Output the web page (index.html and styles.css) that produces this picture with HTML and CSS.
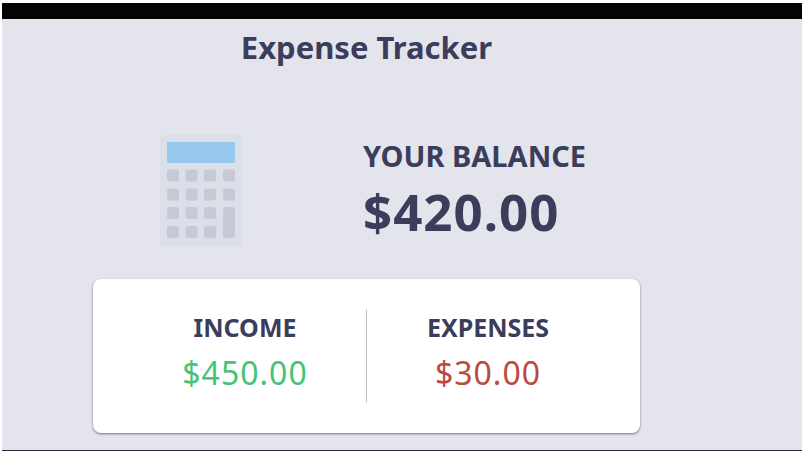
FILE: index.html
```html
<!DOCTYPE html>
<html lang="en">
<head>
<meta charset="utf-8">
<title>Expense Tracker</title>
<link rel="stylesheet" href="styles.css">
</head>
<body>
<div class="screen">
  <main class="tracker">
    <h1 class="title">Expense Tracker</h1>
    <section class="balance">
      <svg class="calculator" viewBox="0 0 82 112" aria-hidden="true">
        <rect width="82" height="112" rx="4" fill="#dadfe8"/>
        <rect x="7" y="7" width="68" height="21" fill="#97c8ed"/>
        <g fill="#c5cad6">
          <rect x="7" y="34.500" width="12" height="12" rx="2.500"/><rect x="25.500" y="34.500" width="12" height="12" rx="2.500"/><rect x="44" y="34.500" width="12" height="12" rx="2.500"/><rect x="63" y="34.500" width="12" height="12" rx="2.500"/>
          <rect x="7" y="53.500" width="12" height="12" rx="2.500"/><rect x="25.500" y="53.500" width="12" height="12" rx="2.500"/><rect x="44" y="53.500" width="12" height="12" rx="2.500"/><rect x="63" y="53.500" width="12" height="12" rx="2.500"/>
          <rect x="7" y="72" width="12" height="12" rx="2.500"/><rect x="25.500" y="72" width="12" height="12" rx="2.500"/><rect x="44" y="72" width="12" height="12" rx="2.500"/>
          <rect x="7" y="91" width="12" height="12" rx="2.500"/><rect x="25.500" y="91" width="12" height="12" rx="2.500"/><rect x="44" y="91" width="12" height="12" rx="2.500"/>
          <rect x="63" y="72" width="12" height="31" rx="2.500"/>
        </g>
      </svg>
      <div class="balance-text">
        <h2 class="balance-label">YOUR BALANCE</h2>
        <p class="balance-total">$420.00</p>
      </div>
    </section>
    <section class="summary">
      <div class="summary-item">
        <h3 class="summary-label">INCOME</h3>
        <p class="money income">$450.00</p>
      </div>
      <div class="summary-item">
        <h3 class="summary-label">EXPENSES</h3>
        <p class="money expense">$30.00</p>
      </div>
    </section>
  </main>
</div>
</body>
</html>
```
FILE: styles.css
```css
* {
  box-sizing: border-box;
}

body {
  margin: 0;
  padding: 3px 2px;
  background: #fff;
  color: #3b3d5b;
  font-family: "Noto Sans", "Open Sans", sans-serif;
}

h1, h2, h3, p {
  margin: 0;
}

.screen {
  border-top: 16px solid #040404;
  border-bottom: 1px solid #2b2b35;
  background: #e4e4ed;
  padding-bottom: 17px;
}

.tracker {
  margin: 0 162px 0 91px;
}

.title {
  padding-top: 8px;
  font-size: 31px;
  font-weight: 700;
  line-height: 40px;
  text-align: center;
}

.balance {
  display: flex;
  align-items: center;
  gap: 121px;
  padding: 68px 0 32px 67px;
}

.calculator {
  flex: none;
  width: 82px;
  height: 112px;
}

.balance-label {
  font-size: 29px;
  font-weight: 700;
  line-height: 40px;
}

.balance-total {
  font-size: 51px;
  font-weight: 700;
  line-height: 70px;
  letter-spacing: 1px;
}

.summary {
  display: flex;
  padding: 31px;
  border-radius: 8px;
  background: #fff;
  box-shadow: 0 1px 3px rgba(0, 0, 0, 0.24), 0 1px 2px rgba(0, 0, 0, 0.3);
}

.summary-item {
  flex: 1;
  text-align: center;
}

.summary-item + .summary-item {
  border-left: 1px solid #bfbfc3;
}

.summary-label {
  font-size: 25px;
  font-weight: 700;
  line-height: 34px;
}

.money {
  padding: 8px 0;
  font-size: 32px;
  line-height: 42px;
  letter-spacing: 1px;
}

.income {
  color: #45c476;
}

.expense {
  color: #b94a3e;
}
```
